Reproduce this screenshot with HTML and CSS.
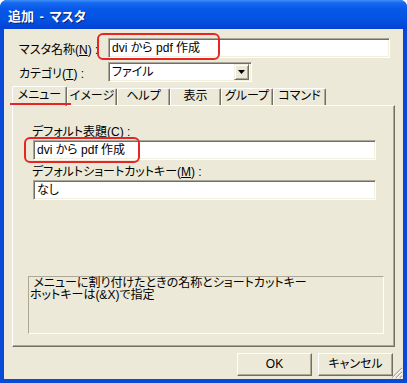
FILE: index.html
```html
<!DOCTYPE html>
<html lang="ja">
<head>
    <meta charset="UTF-8">
    <title>追加 - マスタ</title>
    <link rel="stylesheet" href="styles.css">
</head>
<body>
<div class="window">
    <!--タイトルバー-->
    <div class="titlebar"><span class="title">追加 - マスタ</span></div>
    <div class="client">
        <div class="row">
            <label class="lbl">マスタ名称(<u>N</u>) :</label>
            <div class="field wide">dvi から pdf 作成</div>
        </div>
        <div class="row row-cat">
            <label class="lbl">カテゴリ(<u>T</u>) :</label>
            <div class="field combo">
                <span class="combo-text">ファイル</span>
                <span class="drop"><svg width="7" height="4" viewBox="0 0 7 4"><path d="M0 0h7L3.5 4z" fill="#000"/></svg></span>
            </div>
        </div>
        <!--タブ-->
        <div class="tabs">
            <div class="tab sel">メニュー</div>
            <div class="tab t2">イメージ</div>
            <div class="tab t3">ヘルプ</div>
            <div class="tab t4">表示</div>
            <div class="tab t5">グループ</div>
            <div class="tab t6">コマンド</div>
        </div>
        <div class="panel">
            <label class="plbl first">デフォルト表題(<u>C</u>) :</label>
            <div class="field pfield">dvi から pdf 作成</div>
            <label class="plbl">デフォルトショートカットキー(<u>M</u>) :</label>
            <div class="field pfield">なし</div>
            <div class="desc">
                <div class="desc-line"> メニューに割り付けたときの名称とショートカットキー</div>
                <div class="desc-line">ホットキーは(&amp;X)で指定</div>
            </div>
        </div>
        <div class="buttons">
            <div class="btn">OK</div>
            <div class="btn">キャンセル</div>
        </div>
        <!--赤い注釈-->
        <div class="mark mark-name"></div>
        <div class="mark mark-title"></div>
        <div class="mark-line"></div>
        <svg class="grip" width="12" height="12" viewBox="0 0 12 12">
            <path d="M11 1L1 11M11 5L5 11M11 9L9 11" stroke="#aca899" stroke-width="1.2"/>
            <path d="M11 2L2 11M11 6L6 11M11 10L10 11" stroke="#fff" stroke-width="1"/>
        </svg>
    </div>
</div>
</body>
</html>
```

FILE: styles.css
```css
*{
    margin: 0;
    padding: 0;
    box-sizing: border-box;
}
body{
    width: 407px;
    height: 383px;
    background-color: #fff;
    font-family: "Liberation Sans", "Noto Sans CJK JP", sans-serif;
    font-size: 12px;
    font-feature-settings: "palt";
    color: #000;
}
.window{
    width: 407px;
    height: 383px;
    display: flex;
    flex-direction: column;
    background-color: #0a4ad8;
    border-radius: 7px 7px 0 0;
    overflow: hidden;
}
/*タイトルバー*/
.titlebar{
    height: 29px;
    flex: none;
    display: flex;
    align-items: center;
    padding-left: 8px;
    background: linear-gradient(180deg, #3e8ef7 0, #1668f0 3px, #0658e8 9px, #0554e4 18px, #0449da 25px, #0342d2 29px);
}
.title{
    color: #fff;
    font-weight: bold;
    font-size: 13px;
    word-spacing: 2px;
    text-shadow: 1px 1px 0 #0a1f7a;
    padding-top: 1px;
}
.client{
    position: relative;
    flex: 1;
    margin: 0 4px 4px 4px;
    background-color: #ece9d8;
    padding: 9px 8px 0 8px;
    box-shadow: -1px 0 0 #0845d6, 1px 0 0 #0845d6;
}
.row{
    display: flex;
    align-items: center;
    height: 20px;
    padding-left: 7px;
}
.row-cat{
    margin-top: 4px;
}
.lbl{
    width: 89px;
    flex: none;
    white-space: nowrap;
}
.field{
    height: 20px;
    background-color: #fff;
    border: 1px solid;
    border-color: #aca899 #fff #fff #aca899;
    box-shadow: inset 1px 1px 0 #716f64, inset -1px -1px 0 #f1efe2;
    padding: 0 3px;
    line-height: 18px;
    white-space: nowrap;
}
.wide{
    width: 282px;
}
.combo{
    width: 144px;
    display: flex;
    justify-content: space-between;
    align-items: center;
    padding-right: 2px;
}
.drop{
    width: 15px;
    height: 16px;
    background-color: #ece9d8;
    border: 1px solid;
    border-color: #f1efe2 #716f64 #716f64 #f1efe2;
    box-shadow: inset 1px 1px 0 #fff, inset -1px -1px 0 #aca899;
    display: flex;
    align-items: center;
    justify-content: center;
}
/*タブ*/
.tabs{
    display: flex;
    align-items: flex-end;
    margin-top: 4px;
    height: 19px;
    padding-left: 1px;
    position: relative;
    z-index: 1;
}
.tab{
    height: 17px;
    width: 51px;
    text-align: center;
    line-height: 15px;
    border-top: 1px solid #fff;
    border-left: 1px solid #fff;
    border-right: 1px solid #716f64;
    box-shadow: inset -1px 0 0 #aca899;
    border-radius: 2px 2px 0 0;
    white-space: nowrap;
}
.tab.sel{
    height: 20px;
    width: 55px;
    margin-bottom: -1px;
    margin-left: -1px;
    background-color: #ece9d8;
    line-height: 17px;
}
.t2{ width: 50px; }
.t3{ width: 53px; }
.t4{ width: 51px; }
.t5{ width: 52px; }
.t6{ width: 53px; }
.panel{
    height: 242px;
    border: 1px solid;
    border-color: #fff #716f64 #716f64 #fff;
    box-shadow: inset -1px -1px 0 #aca899;
    display: flex;
    flex-direction: column;
    padding: 0 18px 0 19px;
}
.plbl{
    height: 14px;
    line-height: 14px;
    margin-top: 5px;
    white-space: nowrap;
}
.plbl.first{
    margin-top: 19px;
}
.pfield{
    margin-top: 1px;
    margin-left: 1px;
    height: 20px;
}
.desc{
    margin: 76px -8px 0 -4px;
    height: 58px;
    border: 1px solid;
    border-color: #aca899 #fff #fff #aca899;
    padding: 0 0 0 1px;
}
.desc-line{
    height: 12px;
    line-height: 12px;
    white-space: pre;
}
.buttons{
    display: flex;
    justify-content: flex-end;
    gap: 6px;
    margin-top: 6px;
    padding-right: 2px;
}
.btn{
    width: 75px;
    height: 23px;
    text-align: center;
    line-height: 21px;
    border: 1px solid;
    border-color: #fff #716f64 #716f64 #fff;
    box-shadow: inset -1px -1px 0 #aca899;
    background-color: #ece9d8;
}
/*赤い注釈*/
.mark{
    position: absolute;
    border: 2px solid #e82424;
    border-radius: 6px;
}
.mark-name{
    left: 93px;
    top: 4px;
    width: 123px;
    height: 27px;
}
.mark-title{
    left: 20px;
    top: 108px;
    width: 116px;
    height: 26px;
}
.mark-line{
    position: absolute;
    left: 6px;
    top: 74px;
    width: 61px;
    height: 2px;
    background-color: #e82424;
    z-index: 2;
}
.grip{
    position: absolute;
    right: 0;
    bottom: 0;
}
```
